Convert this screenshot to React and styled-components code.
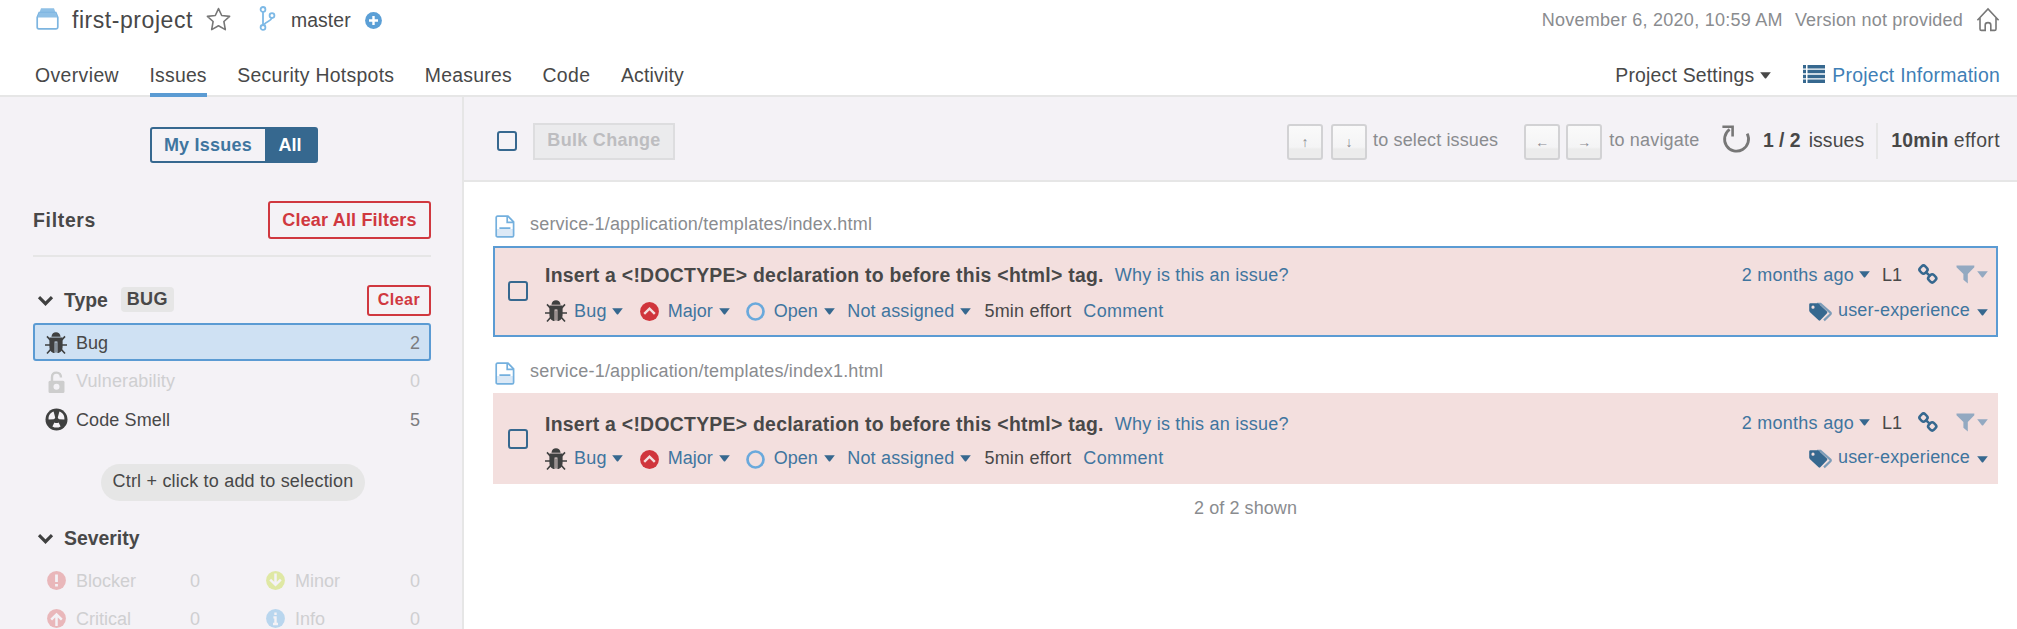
import React from 'react';
import styled, { createGlobalStyle } from 'styled-components';

const c = {
  blue: '#5b9bd3',
  dark: '#36688f',
  link: '#3f759f',
  red: '#d0383f',
  text: '#484848',
  gray: '#8a8c8f',
  bg: '#f4f2f6',
  line: '#e6e6e6',
};

const Global = createGlobalStyle`
  * { box-sizing: border-box; }
  body {
    margin: 0;
    background: #fff;
    color: ${c.text};
    font: 18px "Liberation Sans", Arial, sans-serif;
    overflow: hidden;
  }
`;

const Page = styled.div`
  display: flex;
  flex-direction: column;
  height: 629px;
  overflow: hidden;
`;

const Text = styled.span`
  white-space: pre;
  flex: none;
  color: ${(p) => p.$color || 'inherit'};
  font-size: ${(p) => p.$size || 18}px;
  font-weight: ${(p) => (p.$bold ? 700 : 400)};
  letter-spacing: ${(p) => p.$ls || 0}px;
  margin-left: ${(p) => p.$ml || 0}px;
`;

const Svg = styled.svg`
  flex: none;
  display: block;
  overflow: visible;
  margin-left: ${(p) => p.$ml || 0}px;
  margin-top: ${(p) => p.$mt || 0}px;
`;

/* Header */
const Header = styled.header`
  height: 97px;
  flex: none;
  border-bottom: 2px solid ${c.line};
`;
const Crumbs = styled.div`
  display: flex;
  align-items: center;
  height: 40px;
  padding: 0 17px 0 36px;
`;
const Meta = styled.div`
  display: flex;
  align-items: center;
  margin-left: auto;
  color: ${c.gray};
`;
const Nav = styled.nav`
  display: flex;
  align-items: stretch;
  height: 57px;
  padding: 14px 17px 0 35px;
  gap: 30.5px;
`;
const Tab = styled.a`
  display: flex;
  align-items: center;
  padding-top: 4px;
  border-bottom: 4px solid ${(p) => (p.$active ? c.blue : 'transparent')};
`;
const NavRight = styled.div`
  display: flex;
  align-items: center;
  margin-left: auto;
`;

/* Sidebar */
const Body = styled.div`
  display: flex;
  flex: 1;
  min-height: 0;
`;
const Sidebar = styled.aside`
  width: 464px;
  flex: none;
  display: flex;
  flex-direction: column;
  background: ${c.bg};
  border-right: 2px solid ${c.line};
  padding: 30px 31px 0 33px;
  overflow: hidden;
`;
const Switch = styled.div`
  display: flex;
  align-self: center;
  width: 168px;
  height: 36px;
  flex: none;
  margin-left: 3px;
  border: 2px solid ${c.dark};
  border-radius: 3px;
`;
const SwitchItem = styled.div`
  display: flex;
  align-items: center;
  justify-content: center;
  width: ${(p) => p.$w}px;
  color: ${(p) => (p.$on ? '#fff' : c.link)};
  background: ${(p) => (p.$on ? c.dark : 'transparent')};
`;
const FiltersHead = styled.div`
  display: flex;
  align-items: center;
  justify-content: space-between;
  height: 38px;
  flex: none;
  margin-top: 38px;
`;
const DangerButton = styled.button`
  display: flex;
  align-items: center;
  justify-content: center;
  width: ${(p) => p.$w}px;
  height: ${(p) => p.$h}px;
  padding: 0;
  border: 2px solid ${c.red};
  border-radius: 3px;
  background: transparent;
  color: ${c.red};
  font-family: inherit;
`;
const Divider = styled.div`
  height: 2px;
  flex: none;
  margin-top: 16px;
  background: ${c.line};
`;
const FacetHead = styled.div`
  display: flex;
  align-items: center;
  flex: none;
  height: 32px;
  margin-top: ${(p) => p.$mt}px;
  padding-left: 4px;
`;
const Badge = styled.span`
  display: flex;
  align-items: center;
  justify-content: center;
  width: 53px;
  height: 25px;
  margin: 0 auto 1px 13px;
  border-radius: 4px;
  background: #e6e6e6;
`;
const Facet = styled.div`
  display: flex;
  align-items: center;
  flex: none;
  height: ${(p) => p.$h || 38}px;
  padding: 2px 9px 0 10px;
  border: 2px solid ${(p) => (p.$active ? c.blue : 'transparent')};
  border-radius: 3px;
  background: ${(p) => (p.$active ? '#cfe1f3' : 'transparent')};
  color: ${(p) => (p.$muted ? '#cfcfd1' : c.text)};
`;
const Slot = styled.span`
  display: flex;
  justify-content: center;
  width: 22px;
  margin-right: 9px;
`;
const Count = styled.span`
  margin-left: auto;
  color: ${(p) => (p.$muted ? '#cfcfd1' : '#7c7d80')};
`;
const FacetList = styled.div`
  flex: none;
  margin-top: 7px;
`;
const Pill = styled.div`
  align-self: center;
  display: flex;
  align-items: center;
  justify-content: center;
  flex: none;
  width: 264px;
  height: 37px;
  margin: 25px 0 0 2px;
  padding-bottom: 2px;
  border-radius: 19px;
  background: #e6e6e6;
`;
const SeverityGrid = styled.div`
  display: grid;
  grid-template-columns: 178px 179px;
  justify-content: space-between;
  flex: none;
  margin-top: 7px;
`;

/* Main */
const Main = styled.main`
  flex: 1;
  min-width: 0;
`;
const Toolbar = styled.div`
  display: flex;
  align-items: center;
  height: 85px;
  padding: 4px 17px 0 33px;
  background: ${c.bg};
  border-bottom: 2px solid ${c.line};
`;
const Checkbox = styled.span`
  flex: none;
  width: 20px;
  height: 20px;
  border: 2px solid ${c.dark};
  border-radius: 3px;
`;
const BulkButton = styled.button`
  width: 142px;
  height: 37px;
  margin: 2px 0 0 16px;
  padding: 0 0 3px;
  border: 2px solid #dddddf;
  background: #ebebed;
  color: #bdbdc0;
  font-family: inherit;
`;
const ToolbarRight = styled.div`
  display: flex;
  align-items: center;
  margin-left: auto;
`;
const Key = styled.kbd`
  display: flex;
  align-items: center;
  justify-content: center;
  width: 36px;
  height: 36px;
  margin: 2px 0 0 ${(p) => p.$ml || 0}px;
  border: 2px solid #d2d2d4;
  border-radius: 3px;
  background: linear-gradient(#fafafa 0, #f4f4f5 66%, #ececec 72%);
  font: 14px "Liberation Sans", sans-serif;
  color: #8b8b92;
`;
const Separator = styled.span`
  width: 2px;
  height: 36px;
  margin-left: 12px;
  background: ${c.line};
`;
const List = styled.div`
  padding: 22px 19px 0 29px;
`;
const FilePath = styled.div`
  display: flex;
  align-items: center;
  height: 42px;
  margin-top: ${(p) => p.$mt || 0}px;
  padding-bottom: 1px;
  color: ${c.gray};
`;
const Issue = styled.article`
  display: flex;
  height: 91px;
  padding: ${(p) => (p.$selected ? '9px 8px 0 0' : '10px 8px 0 0')};
  border: 2px solid ${(p) => (p.$selected ? c.blue : '#f3dfde')};
  background: #f3dfde;
`;
const IssueCheck = styled.div`
  width: 50px;
  flex: none;
  padding: 24px 0 0 13px;
`;
const Lines = styled.div`
  display: flex;
  flex-direction: column;
  align-items: ${(p) => (p.$end ? 'flex-end' : 'flex-start')};
  margin-left: ${(p) => (p.$end ? 'auto' : 0)};
`;
const Line = styled.div`
  display: flex;
  align-items: center;
  height: ${(p) => p.$h || 36}px;
  color: ${c.link};
`;
const Footer = styled.div`
  margin-top: 14px;
  text-align: center;
  color: ${c.gray};
  line-height: 20px;
  letter-spacing: 0.08px;
`;

const Caret = ({ ml = 6, color = c.dark, mt = 0 }) => (
  <Svg $ml={ml} $mt={mt} width="11" height="7" viewBox="0 0 11 7">
    <path d="M.2 .3H10.8L6.2 6.2Q5.5 6.9 4.8 6.2Z" fill={color} />
  </Svg>
);

const BugIcon = ({ mt = 0 }) => (
  <Svg $mt={mt} width="22" height="22" viewBox="0 0 22 22">
    <path d="M6.4 4.8C6.8 1.6 8.6 .2 11 .2S15.2 1.6 15.6 4.8Z" fill="#3f4040" />
    <path d="M4.4 5.6H17.6V14.4C17.6 18.6 15.4 20.8 12.4 21V9.4H9.6V21C6.6 20.8 4.4 18.6 4.4 14.4Z" fill="#3f4040" />
    <path d="M11 10.4V20.6" stroke="#3f4040" strokeWidth="1" />
    <path d="M5.2 8L2 4.4M16.8 8L20 4.4M5 13H0M17 13H22M5.6 17.4L2 21.6M16.4 17.4L20 21.6" stroke="#3f4040" strokeWidth="1.6" fill="none" />
  </Svg>
);

const LockIcon = () => (
  <Svg $mt={1} width="17" height="23" viewBox="0 0 17 23">
    <path d="M4 10V6.2C4 3.4 5.8 1.6 8.5 1.6S13 3.4 13 6.6" fill="none" stroke="#cdcdcd" strokeWidth="2.4" />
    <path fillRule="evenodd" d="M2 9.8H15A1.5 1.5 0 0 1 16.5 11.3V20.5A1.5 1.5 0 0 1 15 22H2A1.5 1.5 0 0 1 .5 20.5V11.3A1.5 1.5 0 0 1 2 9.8ZM8.5 12.8A3 3 0 1 0 8.5 18.8A3 3 0 1 0 8.5 12.8Z" fill="#cdcdcd" />
  </Svg>
);

const SmellIcon = () => (
  <Svg $mt={-3} width="23" height="23" viewBox="0 0 23 23">
    <circle cx="11.5" cy="11.5" r="11" fill="#3f4040" />
    <path d="M3.6 11.4C3.2 7.8 5.3 4.6 8.6 3.6L10.2 9.4C9.9 10.3 9.4 10.9 8.6 11.3ZM19.4 11.4C19.8 7.8 17.7 4.6 14.4 3.6L12.8 9.4C13.1 10.3 13.6 10.9 14.4 11.3ZM9.4 14.4Q11.5 15.4 13.6 14.4L15.6 18.4Q11.5 20.8 7.4 18.4Z" fill={c.bg} />
  </Svg>
);

const severityMarks = {
  blocker: <path d="M9.5 3.6V11M9.5 13V15.6" strokeWidth="2.8" />,
  critical: <path d="M9.5 17V7M4.2 10.6L9.5 5.4L14.8 10.6" strokeWidth="2.5" />,
  major: <path d="M4.2 11.8L9.5 6.6L14.8 11.8" strokeWidth="2.4" />,
  minor: <path d="M9.5 2.4V13M4.2 8.6L9.5 13.8L14.8 8.6" strokeWidth="2.5" />,
  info: <path d="M9.5 3.4V6M7.4 8.4H9.5V15M7 15H12" strokeWidth="2.4" />,
};
const SeverityIcon = ({ kind, color, mark = '#fff', mt = 0, ml = 0 }) => (
  <Svg $mt={mt} $ml={ml} width="19" height="19" viewBox="0 0 19 19">
    <circle cx="9.5" cy="9.5" r="9.4" fill={color} />
    <g stroke={mark} fill="none">{severityMarks[kind]}</g>
  </Svg>
);

const Chevron = () => (
  <Svg $mt={1} width="17" height="12" viewBox="0 0 17 12">
    <path d="M2 2.2L8.5 8.7L15 2.2" fill="none" stroke="#3f4040" strokeWidth="3.1" />
  </Svg>
);

const FileIcon = () => (
  <Svg $ml={2} $mt={3} width="20" height="23" viewBox="0 0 20 23">
    <path d="M2 14H18V21H2Z" fill="#dce9f6" />
    <path d="M1.2 2.6Q1.2 1.2 2.6 1.2H13L18.6 6.8V20.4Q18.6 21.8 17.2 21.8H2.6Q1.2 21.8 1.2 20.4ZM12.2 1.4V7.4H18.4M4.4 13.2H15.4" fill="none" stroke="#74b0de" strokeWidth="1.7" />
  </Svg>
);

const LinkIcon = () => (
  <Svg $ml={16} $mt={-2} width="20" height="20" viewBox="0 0 20 20">
    <g fill="none" stroke={c.dark} strokeWidth="2.5">
      <rect x="1.9" y="2" width="7.2" height="7.2" rx="2.6" transform="rotate(45 5.5 5.6)" />
      <rect x="10.6" y="10.8" width="7.2" height="7.2" rx="2.6" transform="rotate(45 14.2 14.4)" />
      <path d="M7.6 7.8L12.4 12.4" />
    </g>
  </Svg>
);

const issueMenu = (
  <>
    <BugIcon />
    <Text $ml={7} $ls={0.2}>Bug</Text>
    <Caret ml={5.5} />
    <SeverityIcon kind="major" color="#d0353c" mark="#f3dfde" ml={17} mt={1} />
    <Text $ml={8.5}>Major</Text>
    <Caret />
    <Svg $ml={16} $mt={1} width="19" height="19" viewBox="0 0 19 19">
      <circle cx="9.5" cy="9.5" r="8" fill="none" stroke="#6aa9dc" strokeWidth="2.7" />
    </Svg>
    <Text $ml={9}>Open</Text>
    <Caret ml={6.5} />
    <Text $ml={12} $ls={0.18}>Not assigned</Text>
    <Caret />
    <Text $ml={13} $ls={0.2} $color={c.text}>5min effort</Text>
    <Text $ml={12} $ls={0.3}>Comment</Text>
  </>
);

const IssueRow = ({ selected }) => (
  <Issue $selected={selected}>
    <IssueCheck><Checkbox as="div" /></IssueCheck>
    <Lines>
      <Line $h={selected ? 36 : 38}>
        <Text $bold $size={19.4} $ls={0.27} $color={c.text}>
          {'Insert a <!DOCTYPE> declaration to before this <html> tag.'}
        </Text>
        <Text $ml={11} $ls={0.23}>Why is this an issue?</Text>
      </Line>
      <Line $h={selected ? 36 : 31}>{issueMenu}</Line>
    </Lines>
    <Lines $end>
      <Line>
        <Text $ls={0.27}>2 months ago</Text>
        <Caret ml={5} mt={-2} />
        <Text $ml={12} $color={c.text}>L1</Text>
        <LinkIcon />
        <Svg $ml={18} $mt={-1} width="19" height="19" viewBox="0 0 19 19">
          <path d="M.5 .5H18.3V2.2L11.8 9V18.6L7.4 14.8V9L.5 2.2Z" fill="#93a9c1" />
        </Svg>
        <Caret ml={2} mt={-2} color="#93a9c1" />
      </Line>
      <Line $h={selected ? 35 : 33}>
        <Svg $mt={3} width="23" height="18" viewBox="0 0 23 18">
          <path d="M8 .8H11.5L21.4 9.6Q22.2 10.4 21.4 11.2L15 17.4" fill="none" stroke="#7c9cb8" strokeWidth="2.2" />
          <path fillRule="evenodd" d="M1.4 .2H8.2Q9 .2 9.7 .8L18 8.6Q18.8 9.4 18 10.2L11.3 17.3Q10.4 18 9.6 17.3L1 9.2Q.2 8.4 .2 7.6V1.4Q.2 .2 1.4 .2ZM4 2.6A1.6 1.6 0 1 0 4 5.8A1.6 1.6 0 1 0 4 2.6Z" fill={c.dark} />
        </Svg>
        <Text $ml={6} $ls={0.2}>user-experience</Text>
        <Caret ml={7} mt={3} />
      </Line>
    </Lines>
  </Issue>
);

const severities = [
  ['Blocker', 'blocker', '#e9b7ba'],
  ['Minor', 'minor', '#dfe8a4'],
  ['Critical', 'critical', '#e9b7ba'],
  ['Info', 'info', '#b9d6ee'],
];

const tabs = [
  ['Overview', 0.4],
  ['Issues', 0.2],
  ['Security Hotspots', 0.3],
  ['Measures', 0.25],
  ['Code', 0.4],
  ['Activity', 0.2],
];

export default function App() {
  return (
    <Page>
      <Global />
      <Header>
        <Crumbs>
          <Svg width="23" height="22" viewBox="0 0 23 22" $mt={-3}>
            <path d="M5 .3H18L19.5 4.6H3.5Z" fill="#8fc0e6" />
            <path d="M3.2 4.5H19.8L21.8 9.5V19.2Q21.8 20.8 20.2 20.8H2.8Q1.2 20.8 1.2 19.2V9.5Z" fill="#fff" stroke="#7db5e0" strokeWidth="1.7" />
            <path d="M3.3 4.8H19.7L21.4 9.6H1.6Z" fill="#8fc0e6" />
          </Svg>
          <Text $size={23} $ls={0.55} $ml={13}>first-project</Text>
          <Svg $ml={13.5} $mt={-2} width="25" height="24" viewBox="0 0 25 24">
            <path d="M12.5 1.6L15.7 8.5L23.6 9.4L17.9 14.5L19.3 22.6L12.5 18.8L5.7 22.6L7.1 14.5L1.4 9.4L9.3 8.5Z" fill="none" stroke="#777" strokeWidth="1.6" strokeLinejoin="round" />
          </Svg>
          <Svg $ml={27.5} $mt={-3} width="17" height="25" viewBox="0 0 17 25">
            <g fill="none" stroke="#7db9e6" strokeWidth="1.8">
              <circle cx="4" cy="3.4" r="2.4" />
              <circle cx="4" cy="21.4" r="2.4" />
              <circle cx="13" cy="9.6" r="2.4" />
              <path d="M4 6V19M12.6 12C12.2 15.6 8 14.6 5 18.6" />
            </g>
          </Svg>
          <Text $size={19.4} $ls={0.1} $ml={15}>master</Text>
          <Svg $ml={14.5} width="17" height="17" viewBox="0 0 17 17">
            <circle cx="8.5" cy="8.5" r="8.4" fill="#5b9fd6" />
            <path d="M8.5 4V13M4 8.5H13" stroke="#fff" strokeWidth="2.4" />
          </Svg>
          <Meta>
            <Text $ls={0.27}>November 6, 2020, 10:59 AM</Text>
            <Text $ls={0.2} $ml={12}>Version not provided</Text>
            <Svg $ml={13} $mt={-2} width="24" height="25" viewBox="0 0 24 25">
              <path d="M1.4 13.2L12 2L22.6 13.2M4 11V22Q4 23.4 5.4 23.4H9.2V18Q9.2 15.6 12 15.6T14.8 18V23.4H18.6Q20 23.4 20 22V11" fill="none" stroke="#777" strokeWidth="1.6" />
            </Svg>
          </Meta>
        </Crumbs>
        <Nav>
          {tabs.map(([name, ls]) => (
            <Tab key={name} $active={name === 'Issues'}>
              <Text $size={19.4} $ls={ls}>{name}</Text>
            </Tab>
          ))}
          <NavRight>
            <Text $size={19.4} $ls={0.2}>Project Settings</Text>
            <Caret color={c.text} ml={6} mt={-1} />
            <Svg $ml={31.5} $mt={-3} width="22" height="18" viewBox="0 0 22 18">
              <path d="M0 1.8H3M4.5 1.8H22M0 6.6H3M4.5 6.6H22M0 11.4H3M4.5 11.4H22M0 16.2H3M4.5 16.2H22" stroke={c.dark} strokeWidth="3.5" />
            </Svg>
            <Text $size={19.4} $ls={0.26} $ml={7.5} $color="#3f7fb6">Project Information</Text>
          </NavRight>
        </Nav>
      </Header>
      <Body>
        <Sidebar>
          <Switch>
            <SwitchItem $w={113}><Text $bold $ls={0.24}>My Issues</Text></SwitchItem>
            <SwitchItem $w={51} $on><Text $bold>All</Text></SwitchItem>
          </Switch>
          <FiltersHead>
            <Text $bold $size={19.4} $ls={0.7}>Filters</Text>
            <DangerButton $w={163} $h={38}><Text $bold $ls={0.18}>Clear All Filters</Text></DangerButton>
          </FiltersHead>
          <Divider />
          <FacetHead $mt={27}>
            <Chevron />
            <Text $bold $size={19.4} $ml={10}>Type</Text>
            <Badge><Text $bold $ls={0.4}>BUG</Text></Badge>
            <DangerButton $w={64} $h={31}><Text $bold $size={16} $ls={0.45}>Clear</Text></DangerButton>
          </FacetHead>
          <FacetList>
            <Facet $active>
              <Slot><BugIcon /></Slot>Bug<Count>2</Count>
            </Facet>
            <Facet $h={39} $muted>
              <Slot><LockIcon /></Slot><Text $ls={0.13}>Vulnerability</Text><Count $muted>0</Count>
            </Facet>
            <Facet $h={39}>
              <Slot><SmellIcon /></Slot><Text $ls={0.11}>Code Smell</Text><Count>5</Count>
            </Facet>
          </FacetList>
          <Pill><Text $ls={0.2}>Ctrl + click to add to selection</Text></Pill>
          <FacetHead $mt={21}>
            <Chevron />
            <Text $bold $size={19.4} $ml={10}>Severity</Text>
          </FacetHead>
          <SeverityGrid>
            {severities.map(([name, kind, color]) => (
              <Facet key={name} $muted>
                <Slot><SeverityIcon kind={kind} color={color} mark={c.bg} mt={-1} /></Slot>
                {name}
                <Count $muted>0</Count>
              </Facet>
            ))}
          </SeverityGrid>
        </Sidebar>
        <Main>
          <Toolbar>
            <Checkbox />
            <BulkButton><Text $bold $ls={0.3}>Bulk Change</Text></BulkButton>
            <ToolbarRight>
              <Key>↑</Key>
              <Key $ml={8}>↓</Key>
              <Text $color={c.gray} $ls={0.13} $ml={6}>to select issues</Text>
              <Key $ml={26}>←</Key>
              <Key $ml={6}>→</Key>
              <Text $color={c.gray} $ls={0.19} $ml={7}>to navigate</Text>
              <Svg $ml={23} $mt={-2} width="28" height="29" viewBox="0 0 28 29">
                <path d="M7.6 4.4A12 12 0 1 0 25.2 8.6" fill="none" stroke="#777" strokeWidth="2.8" />
                <path d="M.4 1.8H10.6V11.6" fill="none" stroke="#777" strokeWidth="2.6" />
              </Svg>
              <Text $bold $size={19.4} $ml={12.5}>1 / 2</Text>
              <Text $size={19.4} $ls={0.1} $ml={8}>issues</Text>
              <Separator />
              <Text $bold $size={19.4} $ls={0.3} $ml={13}>10min</Text>
              <Text $size={19.4} $ls={0.4} $ml={5}>effort</Text>
            </ToolbarRight>
          </Toolbar>
          <List>
            <FilePath>
              <FileIcon />
              <Text $ls={0.19} $ml={15}>service-1/application/templates/index.html</Text>
            </FilePath>
            <IssueRow selected />
            <FilePath $mt={14}>
              <FileIcon />
              <Text $ls={0.21} $ml={15}>service-1/application/templates/index1.html</Text>
            </FilePath>
            <IssueRow />
            <Footer>2 of 2 shown</Footer>
          </List>
        </Main>
      </Body>
    </Page>
  );
}
